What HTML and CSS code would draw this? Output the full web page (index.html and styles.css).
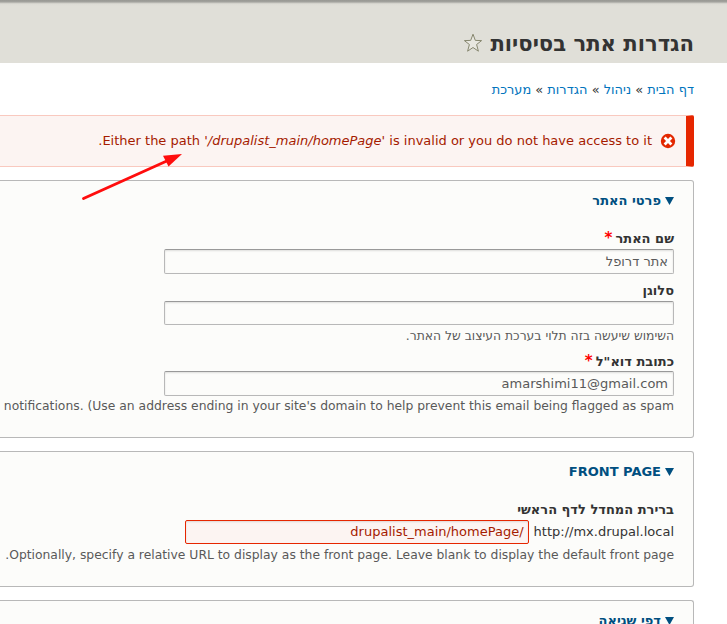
FILE: index.html
```html
<!DOCTYPE html>
<html lang="he" dir="rtl">
<head>
<meta charset="utf-8">
<title>הגדרות אתר בסיסיות</title>
<link rel="stylesheet" href="styles.css">
</head>
<body>
<header class="page-header">
  <h1>הגדרות אתר בסיסיות</h1>
  <svg class="star" viewBox="0 0 20 20"><path d="M10 1.2 12.3 7.4 18.6 7.6 13.6 11.5 15.4 18.2 10 14.5 4.6 18.2 6.4 11.5 1.4 7.6 7.7 7.4Z"/></svg>
</header>
<nav class="breadcrumb"><a>דף הבית</a> » <a>ניהול</a> » <a>הגדרות</a> » <a>מערכת</a></nav>
<main>
  <div class="message">
    <svg class="error-icon" viewBox="0 0 16 16"><circle cx="8" cy="8" r="7.2"/><path d="M4.600 4.600l6.800 6.800M11.400 4.600l-6.800 6.800"/></svg>
    <span>Either the path '<em>/drupalist_main/homePage</em>' is invalid or you do not have access to it.</span>
    <svg class="arrow" viewBox="0 0 110 54"><path class="shaft" d="M6.500 48.500 92 10"/><path class="head" d="M105 4 86 5.700 91.500 16.500Z"/></svg>
  </div>
  <section class="panel site">
    <h2><i class="triangle"></i>פרטי האתר</h2>
    <label class="first">שם האתר <b class="required">*</b></label>
    <div class="field">אתר דרופל</div>
    <label class="slogan">סלוגן</label>
    <div class="field short"></div>
    <p class="slogan-help">השימוש שיעשה בזה תלוי בערכת העיצוב של האתר.</p>
    <label class="email">כתובת דוא"ל <b class="required">*</b></label>
    <div class="field">amarshimi11@gmail.com</div>
    <p class="email-help"><bdi dir="ltr">notifications. (Use an address ending in your site's domain to help prevent this email being flagged as spam</bdi></p>
  </section>
  <section class="panel front">
    <h2><i class="triangle"></i>FRONT PAGE</h2>
    <label class="first">ברירת המחדל לדף הראשי</label>
    <div class="url-row"><span>http://mx.drupal.local</span><div class="field invalid">/drupalist_main/homePage</div></div>
    <p class="front-help">Optionally, specify a relative URL to display as the front page. Leave blank to display the default front page.</p>
  </section>
  <section class="panel errors">
    <h2><i class="triangle"></i>דפי שגיאה</h2>
  </section>
</main>
</body>
</html>
```
FILE: styles.css
```css
* { box-sizing: border-box; }
body {
  margin: 0;
  height: 624px;
  overflow: hidden;
  background: #fff;
  color: #333;
  font: 13px/20px "DejaVu Sans", sans-serif;
}
.page-header {
  display: flex;
  align-items: flex-start;
  gap: 7px;
  height: 63px;
  padding: 30px 33px 0 0;
  background: linear-gradient(#989893 0, #a3a39e 2px, #c9c8c2 3px, #dddcd5 4px, #e0dfd8 6px);
}
h1 { margin: 0; font-size: 21.125px; line-height: 28px; white-space: nowrap; }
.star { width: 20px; height: 20px; margin-top: 3px; fill: #e8e7e0; stroke: #87876f; stroke-width: 1; }
.breadcrumb { height: 52px; padding: 17px 33px 0 0; font-size: 12.95px; }
.breadcrumb a { color: #0074bd; }
main { width: 694px; margin-left: auto; margin-right: 33px; }
.message {
  position: relative;
  display: flex;
  align-items: center;
  gap: 8px;
  height: 52px;
  padding-right: 10px;
  border: 1px solid #f9c9bf;
  border-right: 8px solid #e62600;
  border-left: 0;
  border-radius: 0 2px 2px 0;
  background: #fcf4f2;
  color: #a51b00;
  white-space: nowrap;
}
.error-icon { width: 16px; height: 16px; fill: #e32700; stroke: #fff; stroke-width: 2.8; }
.error-icon circle { stroke: none; }
.arrow { position: absolute; left: 77px; top: 34px; width: 110px; height: 54px; fill: #ff0d0d; }
.arrow .shaft { stroke: #ff0d0d; stroke-width: 2.9; stroke-linecap: round; }
.panel {
  padding: 10px 19px 0 0;
  border: 1px solid #b8b8b8;
  border-left: 0;
  border-radius: 0 3px 3px 0;
  background: #fcfcfa;
}
.site { height: 258px; margin-top: 13px; }
.front { height: 136px; margin-top: 13px; }
.errors { height: 24px; margin-top: 13px; border-bottom: 0; border-bottom-right-radius: 0; }
h2 {
  display: flex;
  align-items: center;
  gap: 4px;
  margin: 0;
  color: #004f80;
  font-size: 13px;
  line-height: 20px;
}
.triangle { width: 9px; height: 8px; background: currentColor; clip-path: polygon(0 0, 100% 0, 50% 100%); }
label { display: block; height: 20px; margin-top: 6px; font-weight: bold; white-space: nowrap; }
label.first { height: 20px; margin-top: 18px; }
label.slogan { margin-top: 7px; }
.required { margin-right: -1.5px; color: #f00; font-size: 15px; line-height: 16px; }
.field {
  width: 510px;
  height: 25px;
  padding: 0 5px;
  border: 1px solid #b8b8b8;
  border-top-color: #999;
  border-radius: 2px;
  background: #fcfcfa;
  box-shadow: inset 0 1px 2px rgba(0, 0, 0, .12);
  color: #595959;
  line-height: 23px;
}
.field.short { height: 24px; }
p { margin: 0; color: #595959; font-size: 12.35px; white-space: nowrap; }
.slogan-help { height: 20px; margin-top: 1px; }
label.email { height: 19px; margin-top: 6px; }
.url-row { display: flex; align-items: center; gap: 5px; height: 24px; line-height: 22px; }
.front-help { margin-top: 1px; }
.invalid {
  width: 344px;
  height: 24px;
  padding: 0 4px;
  border-color: #e62600;
  background: #fcf4f2;
  color: #a51b00;
  line-height: 22px;
}
```
